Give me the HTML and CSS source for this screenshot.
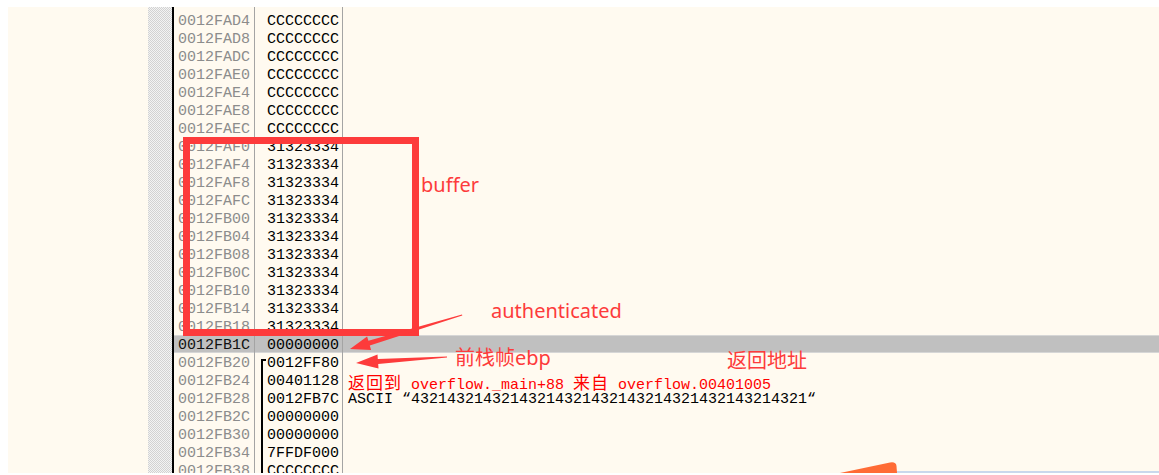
FILE: index.html
```html
<!DOCTYPE html>
<html lang="en">
<head>
  <meta charset="UTF-8" />
  <title>Stack dump</title>
  <link rel="stylesheet" href="styles.css">
</head>
<body>
  <div class="screen">
    <div class="dump">
      <div class="pad"></div>
      <div class="gutter"></div>
      <div class="rows">
        <div class="row"><span class="addr">0012FAD0</span><span class="val">CCCCCCCC</span><span class="note"></span></div>
        <div class="row"><span class="addr">0012FAD4</span><span class="val">CCCCCCCC</span><span class="note"></span></div>
        <div class="row"><span class="addr">0012FAD8</span><span class="val">CCCCCCCC</span><span class="note"></span></div>
        <div class="row"><span class="addr">0012FADC</span><span class="val">CCCCCCCC</span><span class="note"></span></div>
        <div class="row"><span class="addr">0012FAE0</span><span class="val">CCCCCCCC</span><span class="note"></span></div>
        <div class="row"><span class="addr">0012FAE4</span><span class="val">CCCCCCCC</span><span class="note"></span></div>
        <div class="row"><span class="addr">0012FAE8</span><span class="val">CCCCCCCC</span><span class="note"></span></div>
        <div class="row"><span class="addr">0012FAEC</span><span class="val">CCCCCCCC</span><span class="note"></span></div>
        <div class="row"><span class="addr">0012FAF0</span><span class="val">31323334</span><span class="note"></span></div>
        <div class="row"><span class="addr">0012FAF4</span><span class="val">31323334</span><span class="note"></span></div>
        <div class="row"><span class="addr">0012FAF8</span><span class="val">31323334</span><span class="note"></span></div>
        <div class="row"><span class="addr">0012FAFC</span><span class="val">31323334</span><span class="note"></span></div>
        <div class="row"><span class="addr">0012FB00</span><span class="val">31323334</span><span class="note"></span></div>
        <div class="row"><span class="addr">0012FB04</span><span class="val">31323334</span><span class="note"></span></div>
        <div class="row"><span class="addr">0012FB08</span><span class="val">31323334</span><span class="note"></span></div>
        <div class="row"><span class="addr">0012FB0C</span><span class="val">31323334</span><span class="note"></span></div>
        <div class="row"><span class="addr">0012FB10</span><span class="val">31323334</span><span class="note"></span></div>
        <div class="row"><span class="addr">0012FB14</span><span class="val">31323334</span><span class="note"></span></div>
        <div class="row"><span class="addr">0012FB18</span><span class="val">31323334</span><span class="note"></span></div>
        <div class="row current"><span class="addr">0012FB1C</span><span class="val">00000000</span><span class="note"></span></div>
        <div class="row"><span class="addr">0012FB20</span><span class="val framed start">0012FF80</span><span class="note"></span></div>
        <div class="row"><span class="addr">0012FB24</span><span class="val framed">00401128</span><span class="note ret"><span class="cjk">返回到</span> overflow._main+88 <span class="cjk">来自</span> overflow.00401005</span></div>
        <div class="row"><span class="addr">0012FB28</span><span class="val framed">0012FB7C</span><span class="note">ASCII “43214321432143214321432143214321432143214321“</span></div>
        <div class="row"><span class="addr">0012FB2C</span><span class="val framed">00000000</span><span class="note"></span></div>
        <div class="row"><span class="addr">0012FB30</span><span class="val framed">00000000</span><span class="note"></span></div>
        <div class="row"><span class="addr">0012FB34</span><span class="val framed">7FFDF000</span><span class="note"></span></div>
        <div class="row"><span class="addr">0012FB38</span><span class="val framed">CCCCCCCC</span><span class="note"></span></div>
      </div>
    </div>

    <svg class="marks" width="1151" height="466" viewBox="8 7 1151 466">
      <!-- buffer box -->
      <rect x="186.5" y="140.5" width="229" height="192" fill="none" stroke="#fd3b3b" stroke-width="7" />
      <!-- authenticated arrow -->
      <polygon fill="#fd3b3b" points="462,314.5 462.3,315.5 369.8,345.6 371.1,349.9 350,349 367.1,336.5 368.4,340.8" />
      <!-- ebp arrow -->
      <polygon fill="#fd3b3b" points="447,356.5 447,357.5 378.2,364 378.5,368.5 356,363 377.5,354.5 377.8,359" />
      <text class="label" x="421" y="192">buffer</text>
      <text class="label" x="491" y="318">authenticated</text>
      <text class="label" x="455" y="365">前栈帧ebp</text>
      <text class="label" x="727" y="368">返回地址</text>
      <!-- bottom edge -->
      <rect x="895" y="471" width="264" height="2" fill="#c9d8ec" />
      <path d="M840 473 L890 462.5 Q896 461.5 896.5 466 L897 473 Z" fill="#ff6b35" />
    </svg>
  </div>
</body>
</html>
```

FILE: styles.css
```css
:root {
  --cream: #fffaf0;
  --grey-text: #8c8c8c;
  --line: #a4a4a4;
  --mono: 'Liberation Mono', 'DejaVu Sans Mono', monospace;
  --cjk: 'Noto Sans CJK SC', sans-serif;
}

body, html {
  margin: 0;
  padding: 0;
  background: #fff;
}

.screen {
  position: relative;
  margin: 7px 0 0 8px;
  height: 466px;
  background: var(--cream);
  overflow: hidden;
}

.dump {
  display: flex;
  height: 100%;
}

.pad {
  width: 140px;
  flex-shrink: 0;
}

.gutter {
  width: 24px;
  flex-shrink: 0;
  background: repeating-conic-gradient(#d2d2d2 0 25%, #f3f3f3 0 50%) 0 0 / 2px 2px;
  border-right: 2px solid #000;
}

.rows {
  flex: 1;
  margin-top: -14px;
  font-family: var(--mono);
  font-size: 15px;
}

.row {
  display: flex;
  height: 18px;
  line-height: 22px;
  white-space: nowrap;
}

.row.current {
  background: #c0c0c0;
  box-shadow: inset 0 1px 0 #d6d6d6, inset 0 -1px 0 #d6d6d6;
}

.addr {
  width: 81px;
  box-sizing: border-box;
  padding-left: 4px;
  color: var(--grey-text);
  border-right: 1px solid var(--line);
}

.current .addr {
  color: #111;
}

.val {
  position: relative;
  width: 88px;
  box-sizing: border-box;
  padding-left: 12px;
  color: #000;
  border-right: 1px solid var(--line);
}

.val.framed::before {
  content: '';
  position: absolute;
  left: 6px;
  top: 0;
  bottom: 0;
  width: 2px;
  background: #000;
}

.val.start::before {
  top: 6px;
}

.val.start::after {
  content: '';
  position: absolute;
  left: 6px;
  top: 6px;
  width: 5px;
  height: 2px;
  background: #000;
}

.note {
  padding-left: 5px;
  color: #000;
}

.note.ret {
  color: #f00;
}

.cjk {
  font-family: var(--cjk);
  font-size: 17px;
  letter-spacing: 1px;
}

.marks {
  position: absolute;
  left: 0;
  top: 0;
}

.label {
  font-family: 'Noto Sans', 'Noto Sans CJK SC', sans-serif;
  font-size: 20px;
  fill: #fd3b3b;
}
```
